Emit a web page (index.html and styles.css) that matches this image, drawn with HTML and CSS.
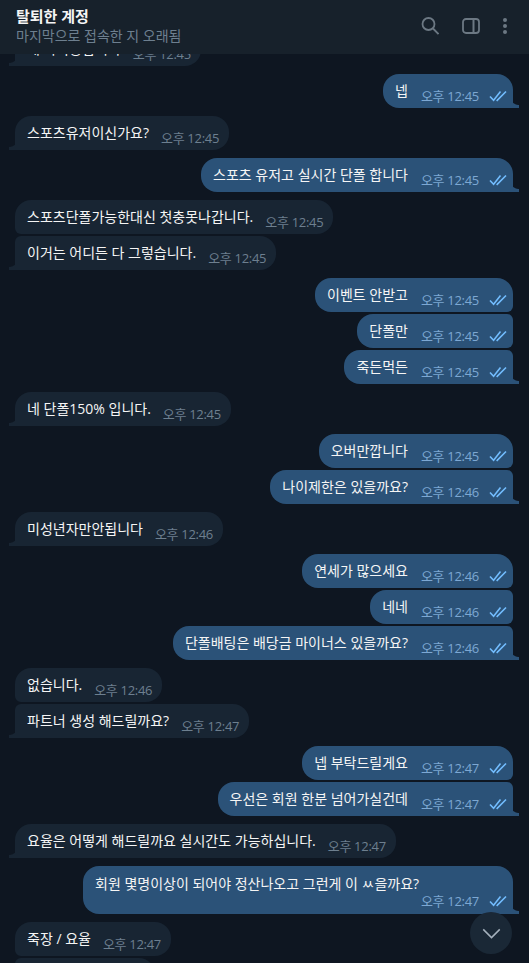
FILE: index.html
```html
<!DOCTYPE html>
<html>
<head>
    <title>탈퇴한 계정</title>
    <link rel="stylesheet" href="styles.css">
</head>
<body>
    <svg class="defs" width="0" height="0">
        <symbol id="checks" viewBox="0 0 18 12">
            <path d="M1 6.500l3.600 3.800L11.500 1.500M7.600 9.800l.6.500L17 1.500" fill="none" stroke="currentColor" stroke-width="1.600"/>
        </symbol>
    </svg>
    <div class="app">
        <header class="top-bar">
            <div class="peer">
                <span class="peer-name">탈퇴한 계정</span>
                <span class="peer-status">마지막으로 접속한 지 오래됨</span>
            </div>
            <div class="actions">
                <svg class="icon icon-search" viewBox="0 0 18 18"><circle cx="7.500" cy="7" r="6"/><path d="M12 11.500l5.500 5.500"/></svg>
                <svg class="icon icon-panel" viewBox="0 0 18 16"><rect x="1" y="1" width="16" height="14" rx="3"/><path d="M11.500 1v14" stroke-width="2"/></svg>
                <svg class="icon icon-more" viewBox="0 0 6 18"><circle cx="3" cy="3" r="2"/><circle cx="3" cy="9" r="2"/><circle cx="3" cy="15" r="2"/></svg>
            </div>
        </header>
        <main class="messages">
            <div class="group in">
                <div class="bubble"><span class="text">네 다가능합니다</span><span class="meta"><span class="time">오후 12:45</span></span></div>
            </div>
            <div class="group out">
                <div class="bubble"><span class="text">넵</span><span class="meta"><span class="time">오후 12:45</span><svg class="check"><use href="#checks"/></svg></span></div>
            </div>
            <div class="group in">
                <div class="bubble"><span class="text">스포츠유저이신가요?</span><span class="meta"><span class="time">오후 12:45</span></span></div>
            </div>
            <div class="group out">
                <div class="bubble"><span class="text">스포츠 유저고 실시간 단폴 합니다</span><span class="meta"><span class="time">오후 12:45</span><svg class="check"><use href="#checks"/></svg></span></div>
            </div>
            <div class="group in">
                <div class="bubble"><span class="text">스포츠단폴가능한대신 첫충못나갑니다.</span><span class="meta"><span class="time">오후 12:45</span></span></div>
                <div class="bubble"><span class="text">이거는 어디든 다 그렇습니다.</span><span class="meta"><span class="time">오후 12:45</span></span></div>
            </div>
            <div class="group out">
                <div class="bubble"><span class="text">이벤트 안받고</span><span class="meta"><span class="time">오후 12:45</span><svg class="check"><use href="#checks"/></svg></span></div>
                <div class="bubble"><span class="text">단폴만</span><span class="meta"><span class="time">오후 12:45</span><svg class="check"><use href="#checks"/></svg></span></div>
                <div class="bubble"><span class="text">죽든먹든</span><span class="meta"><span class="time">오후 12:45</span><svg class="check"><use href="#checks"/></svg></span></div>
            </div>
            <div class="group in">
                <div class="bubble"><span class="text">네 단폴150% 입니다.</span><span class="meta"><span class="time">오후 12:45</span></span></div>
            </div>
            <div class="group out">
                <div class="bubble"><span class="text">오버만깝니다</span><span class="meta"><span class="time">오후 12:45</span><svg class="check"><use href="#checks"/></svg></span></div>
                <div class="bubble"><span class="text">나이제한은 있을까요?</span><span class="meta"><span class="time">오후 12:46</span><svg class="check"><use href="#checks"/></svg></span></div>
            </div>
            <div class="group in">
                <div class="bubble"><span class="text">미성년자만안됩니다</span><span class="meta"><span class="time">오후 12:46</span></span></div>
            </div>
            <div class="group out">
                <div class="bubble"><span class="text">연세가 많으세요</span><span class="meta"><span class="time">오후 12:46</span><svg class="check"><use href="#checks"/></svg></span></div>
                <div class="bubble"><span class="text">네네</span><span class="meta"><span class="time">오후 12:46</span><svg class="check"><use href="#checks"/></svg></span></div>
                <div class="bubble"><span class="text">단폴배팅은 배당금 마이너스 있을까요?</span><span class="meta"><span class="time">오후 12:46</span><svg class="check"><use href="#checks"/></svg></span></div>
            </div>
            <div class="group in">
                <div class="bubble"><span class="text">없습니다.</span><span class="meta"><span class="time">오후 12:46</span></span></div>
                <div class="bubble"><span class="text">파트너 생성 해드릴까요?</span><span class="meta"><span class="time">오후 12:47</span></span></div>
            </div>
            <div class="group out">
                <div class="bubble"><span class="text">넵 부탁드릴게요</span><span class="meta"><span class="time">오후 12:47</span><svg class="check"><use href="#checks"/></svg></span></div>
                <div class="bubble"><span class="text">우선은 회원 한분 넘어가실건데</span><span class="meta"><span class="time">오후 12:47</span><svg class="check"><use href="#checks"/></svg></span></div>
            </div>
            <div class="group in">
                <div class="bubble"><span class="text">요율은 어떻게 해드릴까요 실시간도 가능하십니다.</span><span class="meta"><span class="time">오후 12:47</span></span></div>
            </div>
            <div class="group out">
                <div class="bubble wrapped"><span class="text">회원 몇명이상이 되어야 정산나오고 그런게 이 ㅆ을까요?</span><span class="meta"><span class="time">오후 12:47</span><svg class="check"><use href="#checks"/></svg></span></div>
            </div>
            <div class="group in">
                <div class="bubble"><span class="text">죽장 / 요율</span><span class="meta"><span class="time">오후 12:47</span></span></div>
                <div class="bubble cut-off"></div>
            </div>
        </main>
        <button class="scroll-down">
            <svg viewBox="0 0 20 12"><path d="M1 1.500l9 9 9-9"/></svg>
        </button>
    </div>
</body>
</html>
```
FILE: styles.css
```css
* {
    box-sizing: border-box;
}
html, body {
    margin: 0;
    height: 100%;
}
body {
    background-color: #0e1621;
    color: #f5f5f5;
    font-family: "Open Sans", "Noto Sans CJK KR", sans-serif;
    font-size: 14px;
    overflow: hidden;
}
.defs {
    display: block;
}
.app {
    position: relative;
    height: 963px;
    overflow: hidden;
    display: flex;
    flex-direction: column;
}

/* top bar */
.top-bar {
    position: relative;
    z-index: 2;
    flex: none;
    height: 54px;
    background-color: #17212b;
    display: flex;
    align-items: center;
    justify-content: space-between;
    padding: 0 21px 3px 16px;
}
.peer {
    display: flex;
    flex-direction: column;
}
.peer-name {
    font-weight: 700;
    font-size: 15px;
    line-height: 20px;
    margin-bottom: 1px;
    color: #f5f5f5;
}
.peer-status {
    font-size: 14px;
    line-height: 18px;
    color: #6d7f8f;
}
.actions {
    display: flex;
    align-items: center;
}
.icon {
    display: block;
    fill: none;
    stroke: #6c7883;
    stroke-width: 1.800;
}
.icon-search {
    width: 18px;
    height: 18px;
    margin-right: 23px;
}
.icon-panel {
    width: 18px;
    height: 16px;
    margin-right: 22px;
}
.icon-more {
    width: 6px;
    height: 18px;
    fill: #6c7883;
    stroke: none;
}

/* messages */
.messages {
    flex: 1;
    margin-top: -22px;
    display: flex;
    flex-direction: column;
    gap: 8px;
}
.group {
    display: flex;
    flex-direction: column;
    gap: 2px;
}
.group.in {
    align-items: flex-start;
    padding-left: 15px;
}
.group.out {
    align-items: flex-end;
    padding-right: 16px;
}
.bubble {
    position: relative;
    flex: none;
    display: flex;
    align-items: flex-end;
    min-height: 34px;
    padding: 0 10px 0 12px;
    border-radius: 16px;
}
.bubble.cut-off {
    width: 140px;
}
.text {
    line-height: 20px;
    padding: 7px 0;
    white-space: nowrap;
}
.meta {
    display: flex;
    align-items: center;
    height: 20px;
    margin-left: 12px;
    margin-bottom: 3px;
    font-size: 13px;
    letter-spacing: -0.3px;
}
.time {
    white-space: nowrap;
}
.check {
    width: 18px;
    height: 12px;
    margin: 2px 0 0 10px;
}
.group.in .bubble {
    background-color: #182533;
}
.group.in .time {
    color: #6d7f8f;
}
.group.out .bubble {
    background-color: #2b5278;
    padding-right: 6px;
}
.group.out .meta {
    margin-left: 13px;
}
.group.out .time {
    color: #7da8d3;
}
.group.out .check {
    color: #72bcfd;
}
.bubble.wrapped {
    flex-direction: column;
    align-items: stretch;
    width: 430px;
    min-height: 48px;
}
.wrapped .text {
    padding: 8px 0 0;
}
.wrapped .meta {
    justify-content: flex-end;
    margin-top: -4px;
    margin-bottom: 4px;
}

/* corners inside a group */
.group.in .bubble:not(:first-child) {
    border-top-left-radius: 6px;
}
.group.in .bubble:not(:last-child) {
    border-bottom-left-radius: 6px;
}
.group.out .bubble:not(:first-child) {
    border-top-right-radius: 6px;
}
.group.out .bubble:not(:last-child) {
    border-bottom-right-radius: 6px;
}
.group.in .bubble:last-child {
    border-bottom-left-radius: 0;
}
.group.out .bubble:last-child {
    border-bottom-right-radius: 0;
}

/* tails */
.group .bubble:last-child::after {
    content: "";
    position: absolute;
    bottom: 0;
    width: 7px;
    height: 12px;
}
.group.in .bubble:last-child::after {
    left: -6px;
    background: radial-gradient(circle at 0 0, transparent 8.500px, #182533 9.500px);
}
.group.out .bubble:last-child::after {
    right: -6px;
    background: radial-gradient(circle at 100% 0, transparent 8.500px, #2b5278 9.500px);
}

/* scroll button */
.scroll-down {
    position: absolute;
    right: 17px;
    bottom: 9px;
    z-index: 2;
    width: 42px;
    height: 42px;
    padding: 0;
    border: 0;
    border-radius: 50%;
    background-color: #1a2836;
    display: flex;
    align-items: center;
    justify-content: center;
}
.scroll-down svg {
    width: 19px;
    height: 11px;
    fill: none;
    stroke: #a4b0bc;
    stroke-width: 1.600;
}
```
